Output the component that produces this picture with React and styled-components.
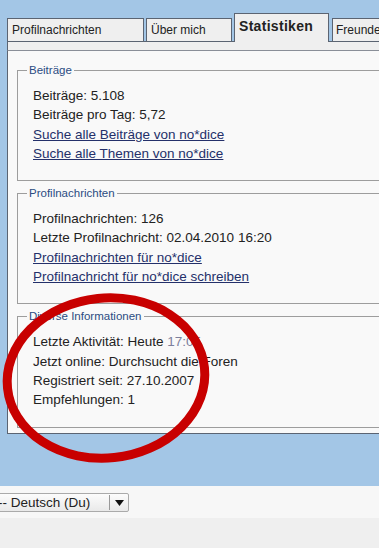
import React from 'react';
import styled, {createGlobalStyle} from 'styled-components';

const GlobalStyle = createGlobalStyle`
    html, body {
        margin: 0;
        padding: 0;
        overflow: hidden;
        background: #efefef;
    }
    body {
        font-family: "Liberation Sans", Arial, sans-serif;
    }
`;

const Page = styled.div`
    position: relative;
    width: 379px;
    height: 548px;
    overflow: hidden;
    display: flex;
    flex-direction: column;
`;

const Blue = styled.div`
    background: #a3c6e6;
    height: 486px;
    box-sizing: border-box;
    padding: 13px 0 0 7px;
`;

const Tabs = styled.div`
    display: flex;
    align-items: flex-end;
    width: 460px;
`;

const Tab = styled.div`
    box-sizing: border-box;
    width: ${p => p.w}px;
    margin-right: ${p => p.gap || 2}px;
    height: ${p => (p.active ? 29 : 23)}px;
    margin-bottom: ${p => (p.active ? -1 : 0)}px;
    position: relative;
    z-index: ${p => (p.active ? 1 : 0)};
    background: #efefef;
    border: 1px solid #5b6472;
    border-bottom: none;
    padding: 4px 0 0 ${p => p.pad || 4}px;
    font-size: ${p => (p.active ? '14px' : '12px')};
    font-weight: ${p => (p.active ? 'bold' : 'normal')};
    letter-spacing: ${p => (p.active ? '0.3px' : '0')};
    color: #222;
    white-space: nowrap;
`;

const Strip = styled.div`
    width: 460px;
    height: 8px;
    background: #efefef;
    border-top: 1px solid #5b6472;
    border-bottom: 1px solid #8a8f98;
    border-left: 1px solid #5b6472;
    box-sizing: content-box;
`;

const Panel = styled.div`
    width: 460px;
    height: 383px;
    box-sizing: border-box;
    background: #f9f9f9;
    border-left: 1px solid #5b6472;
    border-bottom: 1px solid #5b6472;
    padding: 12px 0 0 9px;
    display: flex;
    flex-direction: column;
    gap: 5px;
`;

const Box = styled.fieldset`
    margin: 0;
    width: 500px;
    box-sizing: border-box;
    border: 1px solid #9d9d9d;
    border-right: none;
    padding: 9px 0 17px 15px;
`;

const Legend = styled.legend`
    margin-left: -6px;
    padding: 0 2px;
    font-size: 11.5px;
    color: #2b4c82;
    line-height: 14px;
`;

const Line = styled.div`
    font-size: 13.5px;
    line-height: 19.3px;
    color: #222;
    white-space: nowrap;
`;

const Link = styled.a`
    display: block;
    font-size: 13.5px;
    line-height: 19.3px;
    color: #24306a;
    text-decoration: underline;
    white-space: nowrap;
`;

const Time = styled.span`
    color: #7c7f9c;
`;

const Footer = styled.div`
    background: #f7f7f7;
    height: 32px;
    display: flex;
    align-items: center;
    padding-top: 1px;
    box-sizing: border-box;
`;

const Select = styled.div`
    margin-left: -7px;
    width: 136px;
    height: 19px;
    box-sizing: border-box;
    border: 1px solid #aaa;
    border-radius: 2px;
    background: linear-gradient(#fcfcfc, #e9e9e9);
    display: flex;
    align-items: center;
    font-size: 13.5px;
    color: #222;
`;

const SelectText = styled.span`
    flex: 1;
    padding-left: 4px;
    white-space: nowrap;
`;

const Arrow = styled.span`
    width: 18px;
    height: 15px;
    border-left: 1px solid #999;
    display: flex;
    align-items: center;
    justify-content: center;
`;

const Rest = styled.div`
    flex: 1;
    background: #efefef;
`;

const Ring = styled.svg`
    position: absolute;
    left: 0;
    top: 0;
    pointer-events: none;
`;

export default function App() {
    return (
        <Page>
            <GlobalStyle/>
            <Blue>
                <Tabs>
                    <Tab w={137}>Profilnachrichten</Tab>
                    <Tab w={86} gap={2}>Über mich</Tab>
                    <Tab w={95} gap={3} active>Statistiken</Tab>
                    <Tab w={100} pad={3}>Freunde</Tab>
                </Tabs>
                <Strip/>
                <Panel>
                    <Box>
                        <Legend>Beiträge</Legend>
                        <Line>Beiträge: 5.108</Line>
                        <Line>Beiträge pro Tag: 5,72</Line>
                        <Link href="#">Suche alle Beiträge von no*dice</Link>
                        <Link href="#">Suche alle Themen von no*dice</Link>
                    </Box>
                    <Box>
                        <Legend>Profilnachrichten</Legend>
                        <Line>Profilnachrichten: 126</Line>
                        <Line>Letzte Profilnachricht: 02.04.2010 16:20</Line>
                        <Link href="#">Profilnachrichten für no*dice</Link>
                        <Link href="#">Profilnachricht für no*dice schreiben</Link>
                    </Box>
                    <Box>
                        <Legend>Diverse Informationen</Legend>
                        <Line>Letzte Aktivität: Heute <Time>17:05</Time></Line>
                        <Line>Jetzt online: Durchsucht die Foren</Line>
                        <Line>Registriert seit: 27.10.2007</Line>
                        <Line>Empfehlungen: 1</Line>
                    </Box>
                </Panel>
            </Blue>
            <Footer>
                <Select>
                    <SelectText>-- Deutsch (Du)</SelectText>
                    <Arrow>
                        <svg width="9" height="6" viewBox="0 0 9 6">
                            <path d="M0 0 H9 L4.5 6 Z" fill="#111"/>
                        </svg>
                    </Arrow>
                </Select>
            </Footer>
            <Rest/>
            <Ring width="379" height="548" viewBox="0 0 379 548">
                <ellipse cx="106" cy="378" rx="99" ry="80" fill="none" stroke="#c80000"
                         strokeWidth="9" transform="rotate(-6 106 378)"/>
            </Ring>
        </Page>
    );
}
